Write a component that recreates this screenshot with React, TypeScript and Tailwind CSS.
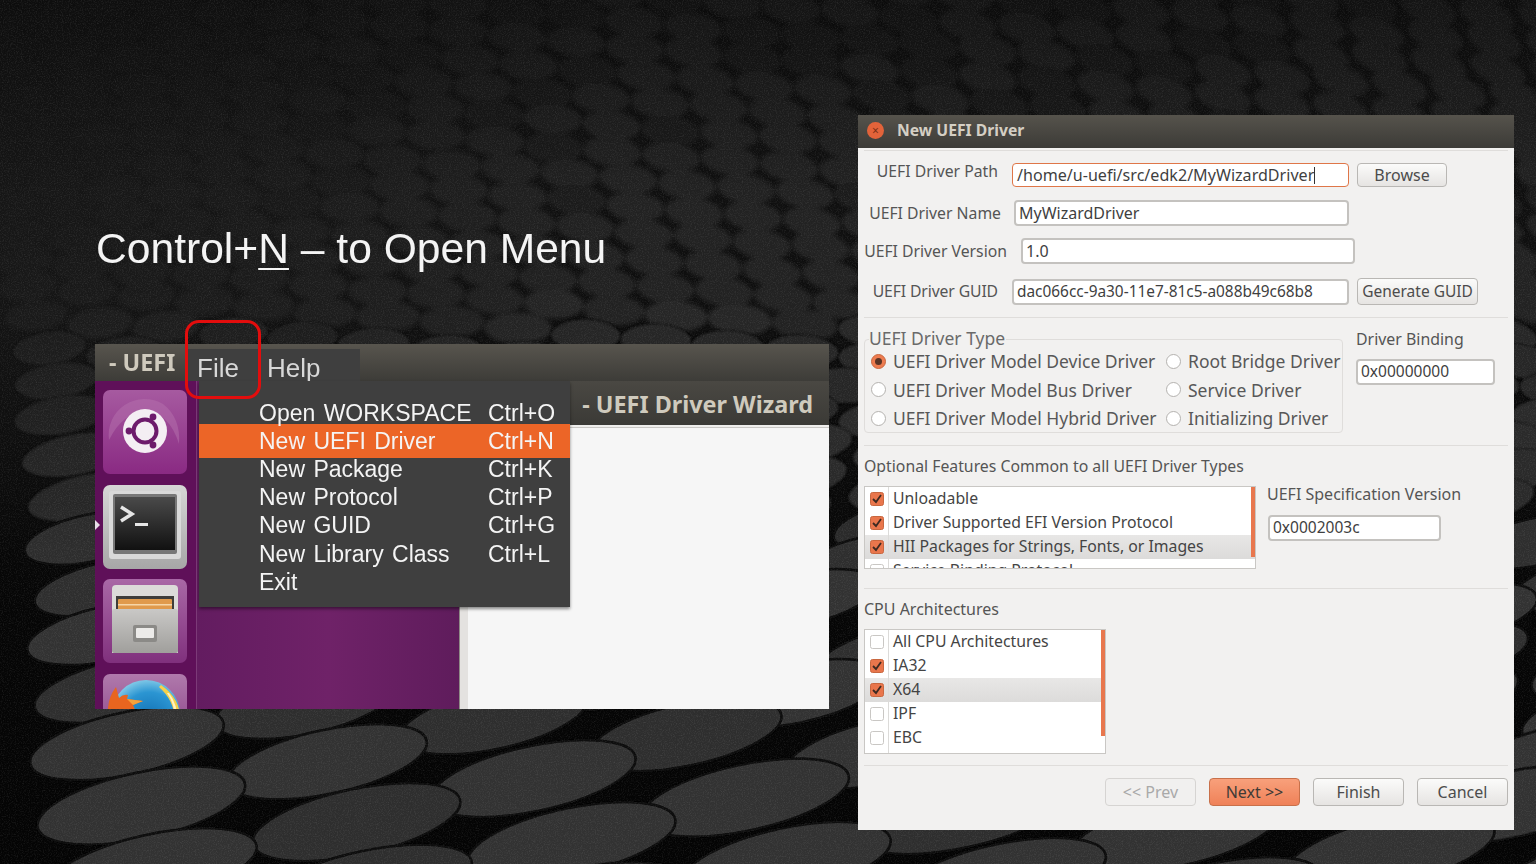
import React from 'react';

// pebble backdrop: rows grow towards the bottom of the slide
type Pebble = { x: number; y: number; rx: number; ry: number; tilt: number; fill: string };

const lerp = (a: number, b: number, t: number) => a + (b - a) * Math.min(1, Math.max(0, t));

function rnd(seed: number) {
  const v = Math.sin(seed * 127.1 + 11.7) * 43758.5453;
  return v - Math.floor(v);
}

const radiusX = (y: number) => (y < 300 ? 29 : lerp(29, 106, (y - 300) / 490));
const radiusY = (y: number) => (y < 300 ? 14.5 : lerp(14.5, 33, (y - 300) / 490));

function buildPebbles() {
  const far: Pebble[] = [];
  const mid: Pebble[] = [];
  const near: Pebble[] = [];
  let y0 = -150;
  let row = 0;
  while (y0 < 900) {
    let x = -120 + row * 9 + rnd(row) * 12;
    let i = 0;
    while (x < 1640) {
      const py = y0 + (x + 120) * 0.085 + rnd(i * 7 + row) * 3;
      const rx = radiusX(py);
      const ry = radiusY(py);
      const tilt = lerp(lerp(-6, 24, x / 1536), -12, (py - 280) / 220);
      const c = Math.round(lerp(31, 47, (py - 200) / 420) + rnd(i + row * 31) * 2);
      if (py > -40 && py < 920) {
        const band = py < 330 ? far : py < 520 ? mid : near;
        band.push({ x, y: py, rx, ry, tilt, fill: `rgb(${c},${c},${c})` });
      }
      x += rx * 2.03;
      i++;
    }
    y0 += radiusY(y0 + 60) * 1.82;
    row++;
  }
  return { far, mid, near };
}

const { far, mid, near } = buildPebbles();

function Backdrop() {
  const draw = (list: Pebble[], edge = 0) =>
    list.map((p, i) => (
      <ellipse
        key={i}
        cx={p.x}
        cy={p.y}
        rx={p.rx}
        ry={p.ry}
        fill={p.fill}
        stroke={edge ? '#080808' : 'none'}
        strokeWidth={edge}
        transform={`rotate(${p.tilt} ${p.x} ${p.y})`}
      />
    ));
  return (
    <svg className="absolute inset-0" width="1536" height="864" viewBox="0 0 1536 864">
      <defs>
        <linearGradient id="base" x1="0" y1="0" x2="0" y2="1">
          <stop offset="0" stopColor="#151515" />
          <stop offset="0.35" stopColor="#0f0f0f" />
          <stop offset="0.7" stopColor="#060606" />
          <stop offset="1" stopColor="#040404" />
        </linearGradient>
        <linearGradient id="leftShade" x1="0" y1="0" x2="1" y2="0">
          <stop offset="0" stopColor="#161616" stopOpacity="0.95" />
          <stop offset="0.17" stopColor="#171717" stopOpacity="0.7" />
          <stop offset="0.4" stopColor="#171717" stopOpacity="0" />
        </linearGradient>
        <linearGradient id="leftFade" x1="0" y1="0" x2="0" y2="1">
          <stop offset="0.4" stopColor="#fff" />
          <stop offset="1" stopColor="#000" />
        </linearGradient>
        <mask id="leftMask">
          <rect width="1536" height="560" fill="url(#leftFade)" />
        </mask>
        <linearGradient id="topShade" x1="0" y1="0" x2="0" y2="1">
          <stop offset="0" stopColor="#000" stopOpacity="0.4" />
          <stop offset="1" stopColor="#000" stopOpacity="0" />
        </linearGradient>
        <filter id="soft" x="-5%" y="-5%" width="110%" height="110%">
          <feGaussianBlur stdDeviation="2" />
        </filter>
        <filter id="mid" x="-5%" y="-5%" width="110%" height="110%">
          <feGaussianBlur stdDeviation="1.3" />
        </filter>
        <filter id="edge" x="-5%" y="-5%" width="110%" height="110%">
          <feGaussianBlur stdDeviation="0.6" />
        </filter>
        <filter id="grain">
          <feTurbulence type="fractalNoise" baseFrequency="0.85" numOctaves="2" seed="4" />
          <feColorMatrix values="0 0 0 0 1  0 0 0 0 1  0 0 0 0 1  1.6 0 0 0 -0.7" />
        </filter>
      </defs>
      <rect width="1536" height="864" fill="url(#base)" />
      <g filter="url(#soft)">{draw(far)}</g>
      <g filter="url(#mid)">{draw(mid, 1)}</g>
      <g filter="url(#edge)">{draw(near, 2.5)}</g>
      <rect width="1536" height="560" fill="url(#leftShade)" mask="url(#leftMask)" />
      <rect width="1536" height="200" fill="url(#topShade)" />
      <rect width="1536" height="864" filter="url(#grain)" opacity="0.13" />
    </svg>
  );
}

const ubuntuFont = "font-['Noto_Sans',sans-serif]";

function UbuntuIcon() {
  return (
    <svg width="84" height="84" viewBox="0 0 84 84" className="shrink-0">
      <defs>
        <linearGradient id="ub" x1="0" y1="0" x2="0" y2="1">
          <stop offset="0" stopColor="#a65aa0" />
          <stop offset="1" stopColor="#8a2a83" />
        </linearGradient>
      </defs>
      <rect width="84" height="84" rx="7" fill="url(#ub)" />
      <path d="M6 50a36 36 0 0 1 54-36q18 14 16 40-10-32-34-32-22 0-36 28z" fill="#b672ae" opacity="0.5" />
      <circle cx="42" cy="41" r="22" fill="#f4eef3" />
      <circle cx="42" cy="41" r="11.5" fill="none" stroke="#6d1b6b" strokeWidth="4" />
      <circle cx="42" cy="41" r="16" fill="none" stroke="#f4eef3" strokeWidth="2" />
      <circle cx="26" cy="41" r="3.4" fill="#6d1b6b" />
      <circle cx="50" cy="27" r="3.4" fill="#6d1b6b" />
      <circle cx="50" cy="55" r="3.4" fill="#6d1b6b" />
    </svg>
  );
}

function TerminalIcon() {
  return (
    <svg width="84" height="84" viewBox="0 0 84 84" className="shrink-0">
      <defs>
        <linearGradient id="tb" x1="0" y1="0" x2="0" y2="1">
          <stop offset="0" stopColor="#d6d6d6" />
          <stop offset="1" stopColor="#a7a7a7" />
        </linearGradient>
        <linearGradient id="ts" x1="0" y1="0" x2="0" y2="1">
          <stop offset="0" stopColor="#4a4a4a" />
          <stop offset="1" stopColor="#111" />
        </linearGradient>
      </defs>
      <rect width="84" height="84" rx="7" fill="url(#tb)" />
      <rect x="6" y="6" width="72" height="68" rx="3" fill="#d9d9d9" />
      <rect x="10" y="9" width="64" height="60" rx="2" fill="#777" />
      <rect x="12" y="12" width="60" height="53" fill="url(#ts)" />
      <path d="M18 22l11 7-11 7" fill="none" stroke="#e6e6e6" strokeWidth="3.5" />
      <rect x="32" y="38" width="13" height="3" fill="#e6e6e6" />
    </svg>
  );
}

function FilesIcon() {
  return (
    <svg width="84" height="84" viewBox="0 0 84 84" className="shrink-0">
      <defs>
        <linearGradient id="fb" x1="0" y1="0" x2="0" y2="1">
          <stop offset="0" stopColor="#a968a6" />
          <stop offset="1" stopColor="#80307d" />
        </linearGradient>
        <linearGradient id="fd" x1="0" y1="0" x2="0" y2="1">
          <stop offset="0" stopColor="#c9c8c6" />
          <stop offset="1" stopColor="#a09f9c" />
        </linearGradient>
      </defs>
      <rect width="84" height="84" rx="7" fill="url(#fb)" />
      <path d="M9 10q0-4 4-4h58q4 0 4 4v64H9z" fill="#dcdbd9" />
      <rect x="13" y="17" width="58" height="14" fill="#3e3d3b" />
      <rect x="15" y="20" width="54" height="13" rx="1" fill="#e09a4c" />
      <rect x="15" y="25" width="54" height="1.5" fill="#f6d6a8" />
      <rect x="9" y="30" width="66" height="44" rx="2" fill="url(#fd)" />
      <rect x="30" y="46" width="24" height="17" rx="2" fill="#8b8a87" />
      <rect x="33" y="49" width="18" height="10" rx="1" fill="#ecebe9" />
    </svg>
  );
}

function FirefoxIcon() {
  return (
    <svg width="84" height="84" viewBox="0 0 84 84" className="shrink-0">
      <defs>
        <linearGradient id="ffb" x1="0" y1="0" x2="0" y2="1">
          <stop offset="0" stopColor="#b07aac" />
          <stop offset="1" stopColor="#80307d" />
        </linearGradient>
        <radialGradient id="ffg" cx="0.55" cy="0.6" r="0.6">
          <stop offset="0" stopColor="#0f6cb0" />
          <stop offset="0.7" stopColor="#2b95d2" />
          <stop offset="1" stopColor="#7cc6e6" />
        </radialGradient>
      </defs>
      <rect width="84" height="84" rx="7" fill="url(#ffb)" />
      <circle cx="43" cy="40" r="34" fill="url(#ffg)" />
      <path d="M58 11q20 14 19 35l-5 0q-1-20-16-33z" fill="#f7d24a" />
      <path d="M66 19q9 12 8 27l-2 0q0-16-8-27z" fill="#fff3c4" />
      <path d="M13 13L16 24Q20 20 25 21L24 25L40 27L30 31L34 40H5V34Q6 22 13 13z" fill="#e8651f" />
      <path d="M24 25l16 2-10 4z" fill="#f5a23c" />
    </svg>
  );
}

function Launcher() {
  return (
    <div className="w-[102px] h-full bg-[#5f1059] border-r border-[#7c3a78] flex flex-col gap-[10.5px] pt-[9px] pl-2 relative shrink-0">
      <UbuntuIcon />
      <TerminalIcon />
      <FilesIcon />
      <FirefoxIcon />
      <div className="absolute left-0 top-[139px] w-0 h-0 border-y-[5px] border-y-transparent border-l-[5px] border-l-[#e8dfe8]" />
    </div>
  );
}

const menuItems = [
  { label: 'Open WORKSPACE', key: 'Ctrl+O' },
  { label: 'New UEFI Driver', key: 'Ctrl+N', active: true },
  { label: 'New Package', key: 'Ctrl+K' },
  { label: 'New Protocol', key: 'Ctrl+P' },
  { label: 'New GUID', key: 'Ctrl+G' },
  { label: 'New Library Class', key: 'Ctrl+L' },
  { label: 'Exit', key: '' },
];

function FileMenu() {
  return (
    <div className="absolute left-[104px] top-[37px] w-[371px] h-[226px] bg-[#3f3f3f] pt-[18px] shadow-[0_2px_3px_rgba(0,0,0,0.45)] font-['Liberation_Sans',sans-serif] text-[23px] text-[#f4f4f4]">
      {menuItems.map((m) => (
        <div
          key={m.label}
          className={m.active ? 'flex items-center h-[34px] -my-[3px] bg-[#ec6527] pl-[60px]' : 'flex items-center h-[28.2px] pl-[60px]'}
        >
          <span className="w-[229px] whitespace-pre [word-spacing:2px]">{m.label}</span>
          <span>{m.key}</span>
        </div>
      ))}
    </div>
  );
}

function EditorWindow() {
  return (
    <div className="absolute left-[95px] top-[344px] w-[734px] h-[365px] overflow-hidden flex flex-col">
      <div className="h-[37px] shrink-0 bg-gradient-to-b from-[#58554e] to-[#3d3c38] flex items-center pl-[14px] font-['Noto_Sans',sans-serif] font-bold text-[23.4px] text-[#cfcabd] relative">
        - UEFI
        <div className="absolute left-[91px] top-[5px] h-[32px] w-[174px] bg-[#3f3f3f] flex items-center pt-[6px] font-['Liberation_Sans',sans-serif] font-normal text-[26px] text-[#d8d8d8]">
          <span className="ml-[11px]">File</span>
          <span className="ml-[28px]">Help</span>
        </div>
      </div>
      <div className="flex-1 flex min-h-0">
        <Launcher />
        <div className="w-[262px] bg-gradient-to-r from-[#631c60] via-[#6f2268] to-[#5f1c5c] shrink-0" />
        <div className="w-[9px] bg-[#e4e2e0] border-l border-[#8f8a86] shrink-0" />
        <div className="flex-1 flex flex-col bg-[#f6f6f6]">
          <div className="h-[44px] shrink-0 bg-gradient-to-b from-[#4a4843] to-[#3b3a36] flex items-center justify-end pr-[16px] pt-[3px] font-['Noto_Sans',sans-serif] font-bold text-[23.4px] text-[#cfcabd]">
            - UEFI Driver Wizard
          </div>
          <div className="h-[3px] bg-[#efeeec] border-b border-[#c9c7c4]" />
        </div>
      </div>
      <FileMenu />
    </div>
  );
}

function Field({ width, value, focus, size = 'text-[15.5px]' }: { width: string; value: string; focus?: boolean; size?: string }) {
  return (
    <div
      className={`${width} shrink-0 bg-white rounded-[4px] flex items-center text-[#3f3f3f] whitespace-nowrap ${size} ${
        focus ? 'h-[24px] pl-[4px] border border-[#df7648]' : 'h-[26px] pl-[3px] border-2 border-[#c4c2bf]'
      }`}
    >
      {value}
      {focus && <span className="inline-block w-px h-[17px] bg-[#333]" />}
    </div>
  );
}

function Btn({ label, width, tone = 'plain', size = 'text-[16px]' }: { label: string; width: string; tone?: 'plain' | 'primary' | 'off'; size?: string }) {
  const look =
    tone === 'primary'
      ? 'bg-gradient-to-b from-[#f8a07b] to-[#ef8158] border-[#c8704a] text-[#403a36]'
      : tone === 'off'
        ? 'bg-[#f1f0ef] border-[#d6d4d2] text-[#a9a9a9]'
        : 'bg-gradient-to-b from-[#fbfbfa] to-[#e6e4e2] border-[#b9b7b4] text-[#4c4c4c]';
  return (
    <div className={`${width} h-full rounded-[4px] border flex items-center justify-center shrink-0 ${size} ${look}`}>{label}</div>
  );
}

function Radio({ on, label, width }: { on?: boolean; label: string; width: string }) {
  return (
    <div className={`${width} flex items-center gap-[7px] shrink-0`}>
      <span
        className={`w-[15px] h-[15px] rounded-full flex items-center justify-center shrink-0 border ${
          on ? 'bg-[#ee7c50] border-[#c8673f]' : 'bg-white border-[#b4b2af]'
        }`}
      >
        {on && <span className="w-[7px] h-[7px] rounded-full bg-[#5a3426]" />}
      </span>
      <span className="text-[17.5px] text-[#585858] whitespace-nowrap">{label}</span>
    </div>
  );
}

function Check({ on }: { on?: boolean }) {
  return on ? (
    <svg width="14" height="14" viewBox="0 0 14 14" className="shrink-0">
      <rect x="0.5" y="0.5" width="13" height="13" rx="2" fill="#e9764c" stroke="#c8673f" />
      <path d="M3 7l3 3 5-7" fill="none" stroke="#3d2a22" strokeWidth="1.8" />
    </svg>
  ) : (
    <svg width="14" height="14" viewBox="0 0 14 14" className="shrink-0">
      <rect x="0.5" y="0.5" width="13" height="13" rx="2" fill="#fff" stroke="#c9c7c4" />
    </svg>
  );
}

function ListRow({ on, label, active }: { on?: boolean; label: string; active?: boolean }) {
  return (
    <div
      className={`flex items-center h-[24px] shrink-0 ${
        active ? 'bg-gradient-to-b from-[#e8e7e6] to-[#dcdbda]' : ''
      }`}
    >
      <div className="w-[24px] h-full border-r border-[#dcdbd9] flex items-center justify-center shrink-0">
        <Check on={on} />
      </div>
      <span className="ml-[4px] whitespace-nowrap text-[15.8px] text-[#444444]">{label}</span>
    </div>
  );
}

const Rule = () => <div className="h-px bg-[#dfdddb] mx-[6px] shrink-0" />;

const pathRows = [
  { label: 'UEFI Driver Path', lw: 'w-[134px] -mt-[8px]', gap: 'mr-[14px]', field: 'w-[337px]', value: '/home/u-uefi/src/edk2/MyWizardDriver', size: 'text-[16.1px]', focus: true, top: 'mt-[12px]' },
  { label: 'UEFI Driver Name', lw: 'w-[137px]', gap: 'mr-[13px]', field: 'w-[335px]', value: 'MyWizardDriver', size: 'text-[16px]', top: 'mt-[13px]' },
  { label: 'UEFI Driver Version', lw: 'w-[143px]', gap: 'mr-[14px]', field: 'w-[334px]', value: '1.0', size: 'text-[16px]', top: 'mt-[12px]' },
  { label: 'UEFI Driver GUID', lw: 'w-[134px] tracking-[-0.12px]', gap: 'mr-[14px]', field: 'w-[337px]', value: 'dac066cc-9a30-11e7-81c5-a088b49c68b8', size: 'text-[15.4px]', top: 'mt-[14px]' },
];

function NewDriverDialog() {
  return (
    <div className={`absolute left-[858px] top-[115px] w-[656px] h-[715px] bg-[#f2f1f0] flex flex-col ${ubuntuFont}`}>
      <div className="h-[33px] shrink-0 bg-gradient-to-b from-[#56534c] to-[#3c3b37] flex items-center pl-[9px] pb-[2px] gap-[13px]">
        <span className="w-[17px] h-[17px] rounded-full bg-[#e2633a] flex items-center justify-center text-[12px] leading-none text-[#7d3016]">×</span>
        <span className="font-bold text-[15.7px] text-[#d4cfc4]">New UEFI Driver</span>
      </div>
      <div className="h-[2px] shrink-0" />
      <Rule />
      <div className="px-[6px]">
        {pathRows.map((r) => (
          <div key={r.label} className={`flex items-center ${r.top}`}>
            <div className={`${r.lw} ${r.gap} text-right text-[15.75px] leading-[17px] text-[#555555] whitespace-nowrap shrink-0`}>{r.label}</div>
            <Field width={r.field} value={r.value} focus={r.focus} size={r.size} />
            {r.label === 'UEFI Driver Path' && (
              <div className="ml-[8px] h-[24px]">
                <Btn label="Browse" width="w-[90px]" />
              </div>
            )}
            {r.label === 'UEFI Driver GUID' && (
              <div className="ml-[8px] h-[27px]">
                <Btn label="Generate GUID" width="w-[121px]" size="text-[15.5px]" />
              </div>
            )}
          </div>
        ))}
      </div>
      <div className="h-[12px] shrink-0" />
      <Rule />

      <div className="flex px-[6px] mt-[21px] h-[95px] shrink-0">
        <div className="relative w-[479px] h-[94px] border border-[#dfdddb] rounded-[4px] shrink-0 pt-[7px] pl-[6px]">
          <span className="absolute left-[4px] -top-[12px] bg-[#f2f1f0] text-[17.5px] leading-[20px] text-[#6a6a6a] pr-px">UEFI Driver Type</span>
          {[
            [{ on: true, label: 'UEFI Driver Model Device Driver' }, { label: 'Root Bridge Driver' }],
            [{ label: 'UEFI Driver Model Bus Driver' }, { label: 'Service Driver' }],
            [{ label: 'UEFI Driver Model Hybrid Driver' }, { label: 'Initializing Driver' }],
          ].map((row) => (
            <div key={row[0].label} className="flex h-[28.5px]">
              <Radio on={row[0].on} label={row[0].label} width="w-[295px]" />
              <Radio label={row[1].label} width="w-[170px]" />
            </div>
          ))}
        </div>
        <div className="ml-[13px] -mt-[10px]">
          <div className="text-[15.9px] leading-[20px] text-[#555555]">Driver Binding</div>
          <div className="mt-[10px]">
            <Field width="w-[139px]" value="0x00000000" />
          </div>
        </div>
      </div>
      <div className="h-[11px] shrink-0" />
      <Rule />

      <div className="px-[6px] pt-[10px] text-[15.8px] leading-[20px] text-[#555555]">Optional Features Common to all UEFI Driver Types</div>
      <div className="flex px-[6px] mt-[10px] h-[83px] shrink-0">
        <div className="relative w-[392px] h-[83px] bg-white border border-[#c9c7c4] overflow-hidden shrink-0 flex flex-col">
          <ListRow on label="Unloadable" />
          <ListRow on label="Driver Supported EFI Version Protocol" />
          <ListRow on active label="HII Packages for Strings, Fonts, or Images" />
          <ListRow label="Service Binding Protocol" />
          <div className="absolute right-0 top-0 w-[4px] h-[70px] bg-[#e8774e]" />
        </div>
        <div className="ml-[11px] -mt-px">
          <div className="text-[16px] leading-[18px] text-[#555555]">UEFI Specification Version</div>
          <div className="mt-[12px] ml-px">
            <Field width="w-[173px]" value="0x0002003c" />
          </div>
        </div>
      </div>
      <div className="h-[19px] shrink-0" />
      <Rule />

      <div className="px-[6px] pt-[10px] text-[16px] leading-[20px] text-[#555555]">CPU Architectures</div>
      <div className="relative ml-[6px] mt-[10px] w-[242px] h-[125px] bg-white border border-[#c9c7c4] overflow-hidden shrink-0">
        <ListRow label="All CPU Architectures" />
        <ListRow on label="IA32" />
        <ListRow on active label="X64" />
        <ListRow label="IPF" />
        <ListRow label="EBC" />
        <div className="absolute left-[23px] top-[120px] bottom-0 w-px bg-[#dcdbd9]" />
        <div className="absolute right-0 top-0 w-[4px] h-[106px] bg-[#e8774e]" />
      </div>
      <div className="h-[11px] shrink-0" />
      <Rule />
      <div className="flex justify-end gap-[13px] pr-[6px] mt-[12px] h-[28px] shrink-0">
        <Btn label="<< Prev" width="w-[91px]" tone="off" />
        <Btn label="Next >>" width="w-[91px]" tone="primary" />
        <Btn label="Finish" width="w-[91px]" />
        <Btn label="Cancel" width="w-[91px]" />
      </div>
    </div>
  );
}

export default function App() {
  return (
    <div className="relative w-[1536px] h-[864px] overflow-hidden bg-[#0d0d0d]">
      <Backdrop />
      <h1 className="absolute left-[96px] top-[222px] font-['Liberation_Sans',sans-serif] font-normal text-[42.6px] leading-[52px] text-[#f4f4f4] whitespace-nowrap">
        Control+<span className="underline decoration-2 underline-offset-[5px]">N</span> – to Open Menu
      </h1>
      <EditorWindow />
      <div className="absolute left-[185px] top-[320px] w-[76px] h-[79px] rounded-[14px] border-[3px] border-[#e30d0d]" />
      <NewDriverDialog />
    </div>
  );
}
